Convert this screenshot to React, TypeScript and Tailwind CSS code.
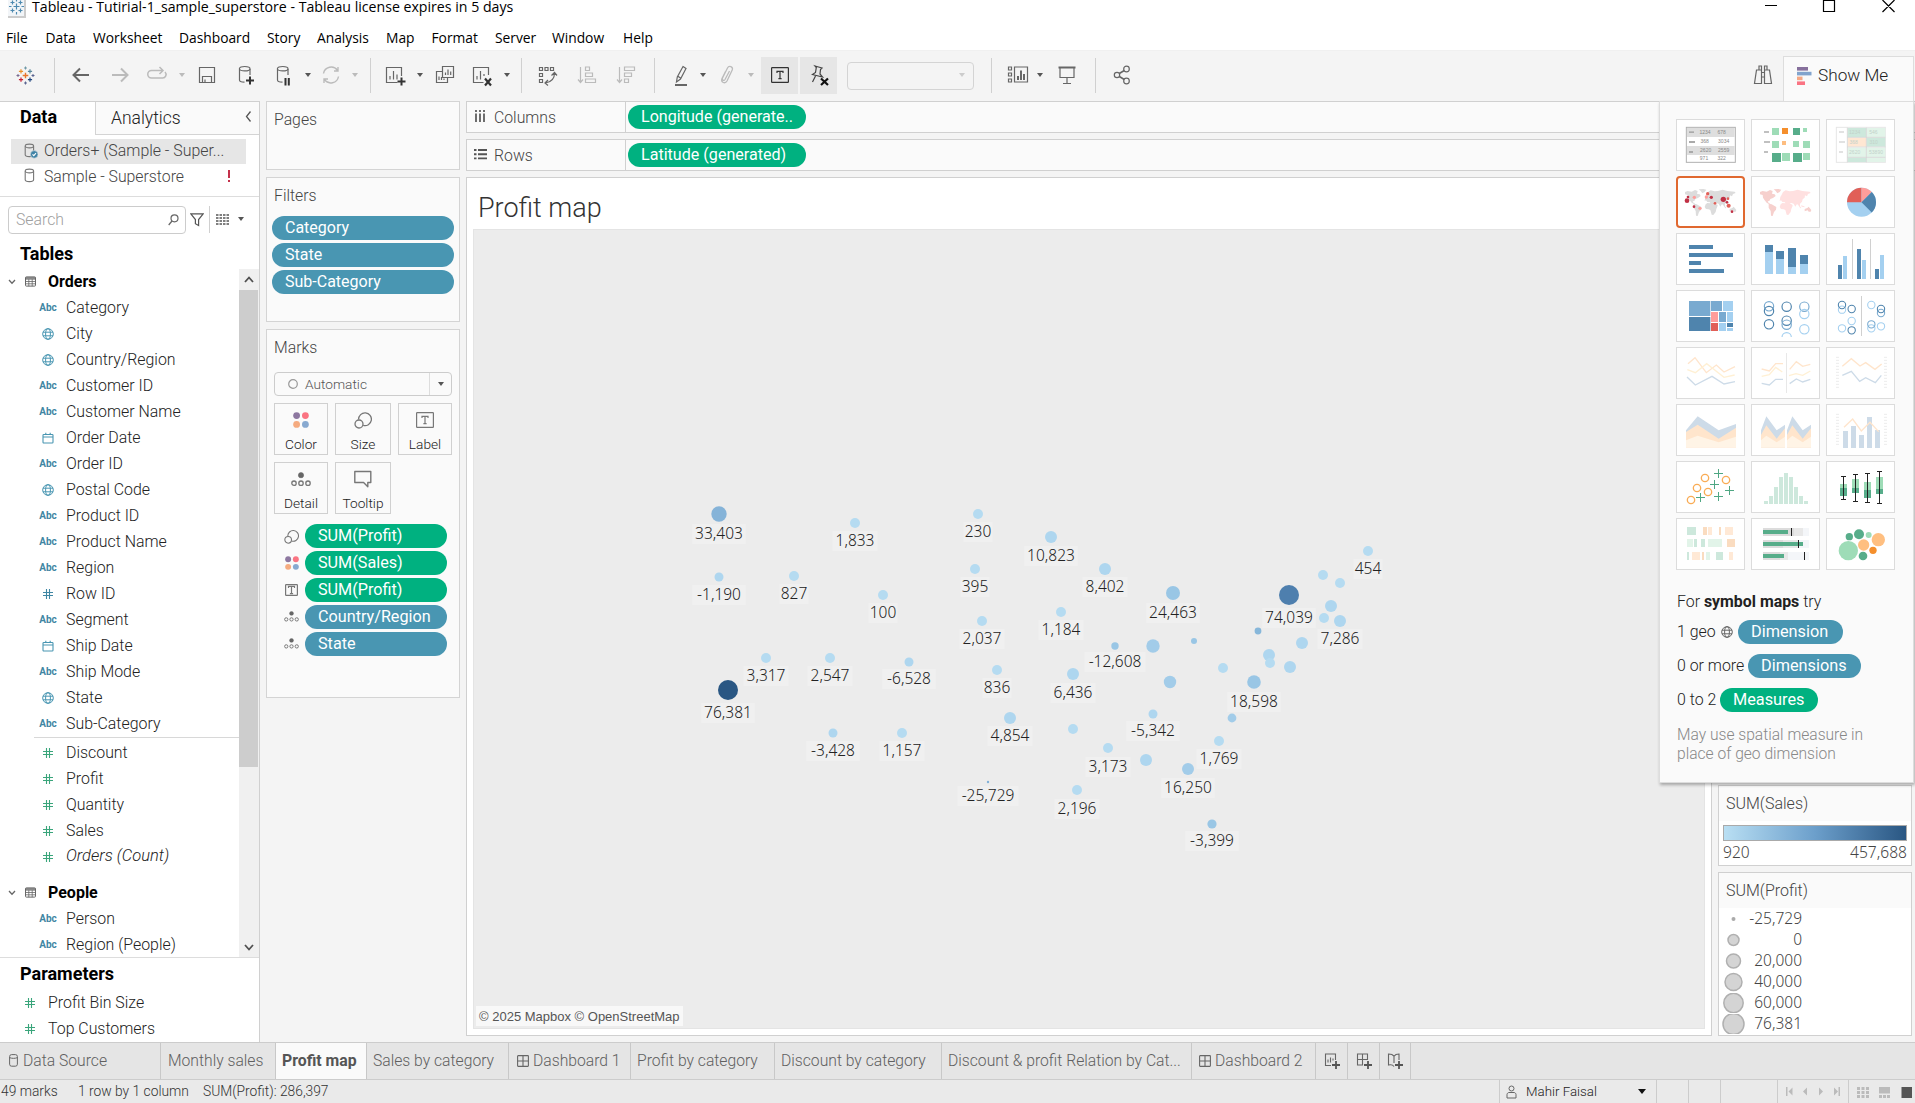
import React from 'react';

const BLUE = '#4996b2';

/* ---------- small icons ---------- */

function Caret({ color = '#555' }: { color?: string }) {
  return (
    <svg width="8" height="5" viewBox="0 0 8 5" className="shrink-0">
      <path d="M1 0h6L4 4z" fill={color} />
    </svg>
  );
}

function Globe({ color = BLUE, size = 12 }: { color?: string; size?: number }) {
  return (
    <svg width={size} height={size} viewBox="0 0 12 12" fill="none" stroke={color} strokeWidth="1">
      <circle cx="6" cy="6" r="5.3" />
      <ellipse cx="6" cy="6" rx="2.4" ry="5.3" />
      <path d="M1 4.2h10M1 7.8h10" />
    </svg>
  );
}

function Hash({ color }: { color: string }) {
  return (
    <svg width="12" height="12" viewBox="0 0 12 12" fill="none" stroke={color} strokeWidth="1.1">
      <path d="M1 4.500h10M1 7.500h10M4.500 1v10M7.500 1v10" />
    </svg>
  );
}

function Calendar() {
  return (
    <svg width="12" height="12" viewBox="0 0 12 12" fill="none" stroke={BLUE} strokeWidth="1.1">
      <rect x="1" y="2.5" width="10" height="8.5" rx="0.8" />
      <path d="M1 5h10M3.8 0.8v2M8.2 0.8v2" />
    </svg>
  );
}

function TableIcon() {
  return (
    <svg width="11" height="11" viewBox="0 0 11 11" fill="none" stroke="#666" strokeWidth="1">
      <rect x="0.5" y="0.9" width="10" height="9.2" rx="0.8" />
      <path d="M0.5 3.2h10M0.5 5.5h10M0.5 7.8h10M3.8 3.2v7M7.2 3.2v7" strokeWidth="0.8" />
      <path d="M0.5 2h10" strokeWidth="1.4" />
    </svg>
  );
}

function Cylinder({ check }: { check?: boolean }) {
  return (
    <svg width="15" height="16" viewBox="0 0 15 16" fill="none" stroke="#777" strokeWidth="1.1" className="shrink-0">
      <path d="M1.2 3.2v8.6c0 1 1.8 1.8 4.2 1.8s4.2-.8 4.2-1.8V3.2" />
      <ellipse cx="5.4" cy="3" rx="4.2" ry="1.9" />
      {check && (
        <>
          <circle cx="10.2" cy="11.4" r="3.8" fill="#3f83a6" stroke="#e6e6e6" strokeWidth="0.6" />
          <path d="M8.5 11.4l1.3 1.3 2.2-2.5" stroke="#fff" />
        </>
      )}
    </svg>
  );
}

function Sizes({ s = 18 }: { s?: number }) {
  return (
    <svg width={s} height={s} viewBox="0 0 18 18" fill="none" stroke="#777" strokeWidth="1.3">
      <path d="M4.600 8.400a6.400 6.400 0 1 1 4.600 6" />
      <circle cx="5" cy="13" r="4" />
    </svg>
  );
}

function FourDots({ s = 16 }: { s?: number }) {
  return (
    <svg width={s} height={s} viewBox="0 0 16 16">
      <circle cx="3.6" cy="3.6" r="3.4" fill="#8d77a0" />
      <circle cx="12.4" cy="3.6" r="3.4" fill="#fa7482" />
      <circle cx="3.6" cy="12.4" r="3.4" fill="#f5ab80" />
      <circle cx="12.4" cy="12.4" r="3.4" fill="#87a9d0" />
    </svg>
  );
}

function DetailIcon({ s = 20 }: { s?: number }) {
  return (
    <svg width={s} height={s * 0.75} viewBox="0 0 20 15" fill="none" stroke="#777" strokeWidth="1.3">
      <circle cx="10" cy="3.2" r="2.6" fill="#666" stroke="#666" strokeWidth="0.6" />
      <circle cx="3" cy="11.2" r="2.2" />
      <circle cx="10" cy="11.2" r="2.2" />
      <circle cx="17" cy="11.2" r="2.2" />
    </svg>
  );
}

function TBox({ w = 18, h = 16, color = '#777' }: { w?: number; h?: number; color?: string }) {
  return (
    <svg width={w} height={h} viewBox={`0 0 ${w} ${h}`} fill="none" stroke={color} strokeWidth="1.2">
      <rect x="0.6" y="0.6" width={w - 1.2} height={h - 1.2} rx="0.6" />
      <path d={`M${w / 2 - 3} ${h / 2 - 2}v-1.700h6v1.700M${w / 2} ${h / 2 - 3.500}v7M${w / 2 - 1.600} ${h / 2 + 3.600}h3.200`} />
    </svg>
  );
}

function TooltipIcon() {
  return (
    <svg width="20" height="18" viewBox="0 0 20 18" fill="none" stroke="#777" strokeWidth="1.4">
      <path d="M1.8 1.5h16v11h-3v4.2l-4.2-4.2H1.8z" strokeLinejoin="round" />
    </svg>
  );
}

function GridTab() {
  return (
    <svg width="12" height="12" viewBox="0 0 12 12" fill="none" stroke="#666" strokeWidth="1.1" className="mb-px shrink-0">
      <rect x="0.6" y="0.6" width="10.8" height="10.8" rx="0.6" />
      <path d="M6 0.6v10.8M0.6 6h10.8" />
    </svg>
  );
}

function Plus({ x, y }: { x: number; y: number }) {
  return <path d={`M${x - 4} ${y}h8M${x} ${y - 4}v8`} stroke="#333" strokeWidth="2" />;
}

function TableauMark() {
  const plus = (x: number, y: number, r: number) => `M${x - r} ${y}h${2 * r}M${x} ${y - r}v${2 * r}`;
  return (
    <svg width="19" height="19" viewBox="-1 -1 19 19" fill="none" strokeWidth="1.2">
      <path d={plus(8.5, 8.5, 2.8)} stroke="#e8762d" strokeWidth="1.4" />
      <path d={plus(4, 4.3, 2.1)} stroke="#eb912c" />
      <path d={plus(13, 4.3, 2.1)} stroke="#59879b" />
      <path d={plus(4, 12.7, 2.1)} stroke="#c72035" />
      <path d={plus(13, 12.7, 2.1)} stroke="#1f457e" />
      <path d={plus(8.5, 1, 1.5)} stroke="#7099a6" strokeWidth="1" />
      <path d={plus(8.5, 16, 1.5)} stroke="#5b6591" strokeWidth="1" />
      <path d={plus(1, 8.5, 1.5)} stroke="#7a6a90" strokeWidth="1" />
      <path d={plus(16, 8.5, 1.5)} stroke="#5b6591" strokeWidth="1" />
    </svg>
  );
}

/* ---------- toolbar ---------- */

function Slot({ w, children }: { w: string; children?: React.ReactNode }) {
  return <div className={`flex h-full shrink-0 items-center justify-center ${w}`}>{children}</div>;
}

function Sep({ w }: { w: string }) {
  return (
    <Slot w={w}>
      <div className="h-[35px] w-px shrink-0 bg-[#d0d0d0]" />
    </Slot>
  );
}

function TI({ children, dim }: { children: React.ReactNode; dim?: boolean }) {
  return (
    <svg width="24" height="24" viewBox="0 0 24 24" fill="none" stroke={dim ? '#bbb' : '#666'} strokeWidth="1.2" className="mb-px shrink-0">
      {children}
    </svg>
  );
}

function Toolbar() {
  return (
    <div className="flex h-[51px] items-center border-t border-[#f0f0f0] bg-[#f4f4f4] pb-px">
      <Slot w="w-[51px]"><TableauMark /></Slot>
      <Sep w="w-[6px]" />
      <Slot w="w-[48px]"><TI><path d="M20 12H5M11 5.500L4.500 12l6.500 6.500" strokeWidth="2" /></TI></Slot>
      <Slot w="w-[30px]"><TI dim><path d="M4 12h15M13 5.500l6.500 6.500-6.500 6.500" strokeWidth="2" /></TI></Slot>
      <Slot w="w-[44px]"><TI dim><path d="M17 7.500H6.500a3.500 3.500 0 0 0 0 7.500h11a3.500 3.500 0 0 0 2.500-6M14.500 4l3.500 3.500-3.500 3.500" strokeWidth="1.500" /></TI></Slot>
      <Slot w="w-[6px]"><Caret color="#bbb" /></Slot>
      <Slot w="w-[44px]"><TI><path d="M4.500 4.500h15v15h-15zM7.500 19.500v-6h9v6M10 19.500v-3" /></TI></Slot>
      <Slot w="w-[34px]"><TI><path d="M5.500 6v11c0 1.400 2 2.200 5 2.200M16 6v6" /><ellipse cx="10.700" cy="5.700" rx="5.300" ry="2.200" /><Plus x={16} y={17.500} /></TI></Slot>
      <Slot w="w-[40px]"><TI><path d="M6.500 6v11c0 1.400 2 2.200 5 2.200M17 6v6" /><ellipse cx="11.700" cy="5.700" rx="5.300" ry="2.200" /><path d="M14.500 15v7.500M17.800 15v7.500" stroke="#333" strokeWidth="2" /></TI></Slot>
      <Slot w="w-[10px]"><Caret /></Slot>
      <Slot w="w-[36px]"><TI dim><path d="M4.500 10.500a7.800 7.800 0 0 1 14-3.200M19.500 13.500a7.800 7.800 0 0 1-14 3.200M15 8h4V4M9 16H5v4" strokeWidth="1.400" /></TI></Slot>
      <Slot w="w-[12px]"><Caret color="#bbb" /></Slot>
      <Sep w="w-[19px]" />
      <Slot w="w-[30px]"><TI><path d="M18.500 13V4.500h-15v15h11M7 16.500v-3.500M10.500 16.500V8M14 16.500v-5" /><Plus x={18.500} y={18.500} /></TI></Slot>
      <Slot w="w-[20px]"><Caret /></Slot>
      <Slot w="w-[29px]"><TI><path d="M9.500 3.500h11v11h-11zM9.500 8.500h-6v11h11v-5M12.500 12V9.500M15 12V6.500M17.700 12V8.500M6 17v-3.500M8.500 17v-3M11 17v-1.500" /></TI></Slot>
      <Slot w="w-[46px]"><TI><path d="M18.500 12V4.500h-15v15h10M7 16.500v-3.500M10.500 16.500V8M14 13v-2" /><path d="M15 15.500l6 7M21 15.500l-6 7" stroke="#333" strokeWidth="2.200" /></TI></Slot>
      <Slot w="w-[3px]"><Caret /></Slot>
      <Sep w="w-[26px]" />
      <Slot w="w-[26px]"><TI><path d="M4.500 4.500h3v3h-3zM10 4.500h3v3h-3zM15.500 4.500h3v3h-3zM4.500 10.500h3v3h-3zM4.500 16.500h3v3h-3zM19.500 10c0 6-3 9-9 10M16.500 12.500l3-3 2.500 3M13 17l-3 3 3 2.500" /></TI></Slot>
      <Slot w="w-[54px]"><TI dim><path d="M5.500 4v15M3 16.500l2.500 3 2.500-3M10.500 4h4v3.500h-4zM10.500 10h7v3.500h-7zM10.500 16h10v3.500h-10z" /></TI></Slot>
      <Slot w="w-[24px]"><TI dim><path d="M5.500 4v15M3 16.500l2.500 3 2.500-3M10.500 4h10v3.500h-10zM10.500 10h7v3.500h-7zM10.500 16h4v3.500h-4z" /></TI></Slot>
      <Sep w="w-[32px]" />
      <Slot w="w-[22px]"><TI><path d="M14 3.500l3 2-5.500 10.500-4 3 .8-5zM8.500 13l3 2" /><path d="M6 22h12" strokeWidth="2" /></TI></Slot>
      <Slot w="w-[21px]"><Caret /></Slot>
      <Slot w="w-[28px]"><TI dim><path d="M14.500 8l-4.500 8.500c-1 1.700-3.500.5-2.500-1.500l5-10c1.500-3 6-1.200 4.700 2L12 18c-1.800 3.300-6.500 1.500-5-2.500l3.500-7" strokeWidth="1.300" /></TI></Slot>
      <Slot w="w-[20px]"><Caret color="#bbb" /></Slot>
      <div className="flex h-[37px] w-[37px] items-center justify-center bg-[#e6e6e6] pb-px"><TBox color="#333" w={18} h={16} /></div>
      <div className="ml-[2px] mr-[10px] flex h-[37px] w-[37px] items-center justify-center bg-[#e6e6e6]">
        <TI><path d="M8 3l7 2-1.500 1.500-.5 4.500 2.500 3-10-2.500 3-2 .8-5zM8.500 13l-3 6" stroke="#444" strokeWidth="1.200" /><path d="M14 15.500l7 6.500M21 15.500l-7 6.500" stroke="#111" strokeWidth="2.200" /></TI>
      </div>
      <div className="flex h-[28px] w-[127px] items-center justify-end rounded-sm border border-[#d4d4d4] pr-[7px]"><Caret color="#ccc" /></div>
      <Sep w="w-[35px]" />
      <Slot w="w-[18px]"><TI><path d="M2.500 4h3v3h-3zM2.500 10h3v3h-3zM2.500 16h3v3h-3zM8.500 4h13v15h-13z" /><path d="M12 17v-4M15 17V7.500M18 17v-6" strokeWidth="2" /></TI></Slot>
      <Slot w="w-[25px]"><Caret /></Slot>
      <Slot w="w-[29px]"><TI><path d="M3.500 4.500h17" strokeWidth="2" /><path d="M5 5v9.500h14V5M12 14.500v5.500M8 20.500h8" /></TI></Slot>
      <Sep w="w-[29px]" />
      <Slot w="w-[24px]"><TI><circle cx="7" cy="12" r="2.700" /><circle cx="16.500" cy="6" r="2.800" /><circle cx="16.500" cy="18" r="2.800" /><path d="M9.300 10.500l5-3M9.300 13.500l5 3" strokeWidth="1.500" /></TI></Slot>
      <div className="ml-auto flex h-full">
        <Slot w="w-[40px]"><TI><path d="M5.500 7h5v13.500h-7zM13.500 7h5l2 13.500h-7zM8 7V3h2.500v4M13.500 7V3H16v4M10.500 9.500h3M10.500 14h3" /></TI></Slot>
        <div className="relative z-20 -mb-px mr-px mt-[5px] flex w-[131px] items-center border border-b-0 border-[#ddd] bg-[#fafafa] pb-[7px] pl-[13px]">
          <svg width="15" height="18" viewBox="0 0 15 18" className="mr-[6px]">
            <path d="M0 0h11v3.600H0z" fill="#86709c" />
            <path d="M0 4.800h14.500v3.600H0z" fill="#82a4cd" />
            <path d="M0 9.600h5.500v3.600H0z" fill="#f5a885" />
            <path d="M0 14.400h8v3.600H0z" fill="#fa7483" />
          </svg>
          <span className="text-[17.200px] text-[#222]">Show Me</span>
        </div>
      </div>
    </div>
  );
}

/* ---------- data pane ---------- */

type Kind = 'abc' | 'geo' | 'date' | 'num' | 'meas';

function FieldIcon({ kind }: { kind: Kind }) {
  if (kind === 'geo') return <Globe />;
  if (kind === 'date') return <Calendar />;
  if (kind === 'num') return <Hash color="#3f86a3" />;
  if (kind === 'meas') return <Hash color="#3aa57b" />;
  return <span className="text-[10px] font-bold text-[#3f86a3]">Abc</span>;
}

function Field({ kind, name, italic }: { kind: Kind; name: string; italic?: boolean }) {
  return (
    <div className="flex h-[26px] items-center">
      <div className="ml-[38px] mr-[8px] flex w-[20px] justify-center"><FieldIcon kind={kind} /></div>
      <span className={italic ? 'text-[16.500px] italic text-[#222]' : 'text-[15.900px] text-[#222]'}>{name}</span>
    </div>
  );
}

function TableHead({ name }: { name: string }) {
  return (
    <div className="flex h-[26px] items-center">
      <svg width="8" height="6" viewBox="0 0 8 6" fill="none" stroke="#666" strokeWidth="1.300" className="ml-[8px] mr-[9px]">
        <path d="M1 1l3 3.200L7 1" />
      </svg>
      <TableIcon />
      <span className="ml-[12px] text-[16px] font-bold text-black">{name}</span>
    </div>
  );
}

const dims: [Kind, string][] = [
  ['abc', 'Category'], ['geo', 'City'], ['geo', 'Country/Region'], ['abc', 'Customer ID'], ['abc', 'Customer Name'],
  ['date', 'Order Date'], ['abc', 'Order ID'], ['geo', 'Postal Code'], ['abc', 'Product ID'], ['abc', 'Product Name'],
  ['abc', 'Region'], ['num', 'Row ID'], ['abc', 'Segment'], ['date', 'Ship Date'], ['abc', 'Ship Mode'], ['geo', 'State'],
  ['abc', 'Sub-Category'],
];

function DataPane() {
  return (
    <div className="flex w-[260px] shrink-0 flex-col border-r border-t border-[#d0d0d0] bg-white">
      <div className="flex h-[33px]">
        <div className="w-[95px] pl-[20px] pt-[3px] text-[18px] font-bold leading-[24px] text-black">Data</div>
        <div className="flex flex-1 justify-between border-b border-l border-[#d4d4d4] bg-[#fafafa] pl-[15px] pr-[7px] pt-[4px] text-[17.500px] leading-[24px] text-[#222]">
          Analytics
          <svg width="7" height="11" viewBox="0 0 7 11" fill="none" stroke="#555" strokeWidth="1.300" className="mt-[5px]">
            <path d="M5.500 0.500l-4 5 4 5" />
          </svg>
        </div>
      </div>
      <div className="h-[58px] pt-[4px]">
        <div className="ml-[11px] flex h-[25px] w-[235px] items-center bg-[#e6e6e6] pl-[13px] text-[15.900px] text-[#444]">
          <Cylinder check /><span className="ml-[5px] whitespace-nowrap">Orders+ (Sample - Super...</span>
        </div>
        <div className="ml-[11px] flex h-[25px] w-[235px] items-center pl-[13px] text-[15.800px] text-[#444]">
          <Cylinder /><span className="ml-[5px]">Sample - Superstore</span>
          <div className="ml-auto mr-[16px] flex flex-col items-center gap-[2px]">
            <i className="h-[8px] w-[2px] bg-[#c4314b]" /><i className="h-[2px] w-[2px] bg-[#c4314b]" />
          </div>
        </div>
      </div>
      <div className="mt-[3px] flex h-[47px] items-center border-t border-[#ddd] pl-[8px]">
        <div className="flex h-[28px] w-[178px] items-center justify-between rounded-sm border border-[#ccc] pl-[7px] pr-[6px] text-[15.800px] text-[#a0a0a0]">
          Search
          <svg width="11" height="12" viewBox="0 0 11 12" fill="none" stroke="#666" strokeWidth="1.200"><circle cx="6.500" cy="4.300" r="3.500" /><path d="M4 7L0.700 11" /></svg>
        </div>
        <svg width="14" height="14" viewBox="0 0 14 14" fill="none" stroke="#555" strokeWidth="1.200" className="ml-[4px]">
          <path d="M0.800 0.800h12.400L8.600 6.500v6l-3.200-1.800V6.500z" />
        </svg>
        <div className="ml-[5px] h-[27px] w-px bg-[#d0d0d0]" />
        <svg width="13" height="11" viewBox="0 0 13 11" stroke="#555" strokeWidth="1.500" className="ml-[6px] mr-[8px]">
          <path d="M0 1h13M0 4h13M0 7h13M0 10h13" strokeDasharray="2.500 1" />
        </svg>
        <Caret />
      </div>
      <div className="h-[26px] pl-[20px] text-[18px] font-bold leading-[21px] text-black">Tables</div>
      <div className="flex h-[690px] overflow-hidden">
        <div className="w-[239px]">
          <TableHead name="Orders" />
          {dims.map(([k, n]) => <Field key={n} kind={k} name={n} />)}
          <div className="mb-[2px] ml-[34px] h-px bg-[#d8d8d8]" />
          <Field kind="meas" name="Discount" />
          <Field kind="meas" name="Profit" />
          <Field kind="meas" name="Quantity" />
          <Field kind="meas" name="Sales" />
          <Field kind="meas" name="Orders (Count)" italic />
          <div className="h-[10px]" />
          <TableHead name="People" />
          <Field kind="abc" name="Person" />
          <Field kind="abc" name="Region (People)" />
        </div>
        <div className="flex h-[689px] w-[20px] flex-col justify-between bg-[#f0f0f0]">
          <div>
            <div className="flex h-[21px] items-center justify-center">
              <svg width="10" height="7" viewBox="0 0 10 7" fill="none" stroke="#505050" strokeWidth="1.800"><path d="M1 6l4-4.500L9 6" /></svg>
            </div>
            <div className="h-[477px] w-[19px] bg-[#cdcdcd]" />
          </div>
          <div className="flex h-[21px] items-center justify-center">
            <svg width="10" height="7" viewBox="0 0 10 7" fill="none" stroke="#505050" strokeWidth="1.800"><path d="M1 1l4 4.500L9 1" /></svg>
          </div>
        </div>
      </div>
      <div className="flex-1 border-t border-[#ddd]">
        <div className="h-[32px] pl-[20px] pt-[3px] text-[18px] font-bold leading-[25px] text-black">Parameters</div>
        {['Profit Bin Size', 'Top Customers'].map((n) => (
          <div key={n} className="flex h-[26px] items-center pl-[24px] text-[15.900px] text-[#222]">
            <Hash color="#3aa57b" /><span className="ml-[12px]">{n}</span>
          </div>
        ))}
      </div>
    </div>
  );
}

/* ---------- cards ---------- */

function MarkButton({ w, label, children }: { w: string; label: string; children: React.ReactNode }) {
  return (
    <div className={`flex h-[52px] flex-col items-center border border-[#d0d0d0] ${w}`}>
      <div className="flex h-[32px] items-center">{children}</div>
      <span className="text-[13.700px] leading-[17px] text-[#222]">{label}</span>
    </div>
  );
}

function MarkPill({ icon, label, green }: { icon: React.ReactNode; label: string; green?: boolean }) {
  return (
    <div className="flex h-[24px] items-center">
      <div className="ml-[7px] flex w-[27px] justify-center">{icon}</div>
      <div className={`flex h-[24px] w-[142px] items-center rounded-full pl-[13px] text-[16.200px] font-[450] text-white ${green ? 'bg-[#00b180]' : 'bg-[#4996b2]'}`}>
        {label}
      </div>
    </div>
  );
}

function Cards() {
  return (
    <div className="flex w-[200px] shrink-0 flex-col gap-[7px] pl-[6px]">
      <div className="h-[69px] border border-[#d4d4d4] bg-[#fafafa] pl-[7px] pt-[7px] text-[15.800px] leading-[22px] text-[#444]">Pages</div>
      <div className="h-[145px] border border-[#d4d4d4] bg-[#fafafa]">
        <div className="pl-[7px] pt-[7px] text-[15.800px] leading-[22px] text-[#444]">Filters</div>
        <div className="ml-[5px] mt-[9px] flex flex-col gap-[3px]">
          {['Category', 'State', 'Sub-Category'].map((n) => (
            <div key={n} className="flex h-[24px] w-[182px] items-center rounded-full bg-[#4996b2] pl-[13px] text-[16px] font-[450] text-white">{n}</div>
          ))}
        </div>
      </div>
      <div className="h-[369px] border border-[#d4d4d4] bg-[#fafafa] pl-[7px]">
        <div className="pt-[7px] text-[15.800px] leading-[22px] text-[#444]">Marks</div>
        <div className="mt-[13px] flex h-[24px] w-[178px] items-center rounded-sm border border-[#ccc] text-[13.700px] text-[#555]">
          <svg width="10" height="10" viewBox="0 0 10 10" className="ml-[13px] mr-[7px]"><circle cx="5" cy="5" r="4.300" fill="none" stroke="#999" strokeWidth="1.200" /></svg>
          Automatic
          <div className="ml-auto flex h-full w-[22px] items-center justify-center border-l border-[#ddd]"><Caret /></div>
        </div>
        <div className="mt-[7px] flex gap-[7px]">
          <MarkButton w="w-[54px]" label="Color"><FourDots /></MarkButton>
          <MarkButton w="w-[56px]" label="Size"><Sizes /></MarkButton>
          <MarkButton w="w-[54px]" label="Label"><TBox /></MarkButton>
        </div>
        <div className="mt-[7px] flex gap-[7px]">
          <MarkButton w="w-[54px]" label="Detail"><DetailIcon /></MarkButton>
          <MarkButton w="w-[56px]" label="Tooltip"><TooltipIcon /></MarkButton>
        </div>
        <div className="-ml-[3px] mt-[10px] flex flex-col gap-[3px]">
          <MarkPill icon={<Sizes s={15} />} label="SUM(Profit)" green />
          <MarkPill icon={<FourDots s={14} />} label="SUM(Sales)" green />
          <MarkPill icon={<TBox w={13} h={12} />} label="SUM(Profit)" green />
          <MarkPill icon={<DetailIcon s={15} />} label="Country/Region" />
          <MarkPill icon={<DetailIcon s={15} />} label="State" />
        </div>
      </div>
    </div>
  );
}

/* ---------- map ---------- */

const c1 = '#b5dbf1';
const c2 = '#aed6ef';
const c3 = '#a2cce9';
const c4 = '#99c6e5';

const marks: [number, number, number, string, string?, number?][] = [
  [719, 514, 7.700, '#85b3d8', '33,403', 534], [855, 523, 5, c1, '1,833', 541], [978, 514, 5, c1, '230', 532],
  [1051, 537, 6, c2, '10,823', 556], [719, 577, 4.500, c2, '-1,190', 595], [794, 576, 5, c1, '827', 594],
  [883, 595, 5, c1, '100', 613], [975, 569, 5, c1, '395', 587], [982, 621, 5, c1, '2,037', 639],
  [1061, 612, 5, c1, '1,184', 630], [766, 658, 5, c1, '3,317', 676], [830, 658, 5, c1, '2,547', 676],
  [909, 662, 4.500, c2, '-6,528', 679], [997, 670, 5, c1, '836', 688], [728, 690, 10, '#2a5783', '76,381', 713],
  [833, 733, 4.500, c2, '-3,428', 751], [902, 733, 5, c1, '1,157', 751], [1010, 718, 6, c2, '4,854', 736],
  [988, 782, 1.200, '#7fb0d8', '-25,729', 796], [1105, 569, 6, c2, '8,402', 587], [1173, 593, 7, c4, '24,463', 613],
  [1289, 595, 10, '#4e7fae', '74,039', 618], [1368, 551, 5, c1, '454', 569], [1340, 621, 6, c2, '7,286', 639],
  [1115, 646, 3.700, c4, '-12,608', 662], [1073, 674, 6, c2, '6,436', 693], [1254, 682, 6.800, c4, '18,598', 702],
  [1153, 714, 4.500, c2, '-5,342', 731], [1108, 748, 5, c1, '3,173', 767], [1219, 741, 5, c1, '1,769', 759],
  [1188, 769, 6, c3, '16,250', 788], [1077, 790, 5, c1, '2,196', 809], [1212, 824, 4.600, c4, '-3,399', 841],
  [1323, 575, 5, c1], [1340, 583, 5, c1], [1331, 606, 6, c2], [1324, 618, 5, c1], [1302, 643, 6, c2],
  [1258, 631, 3.400, '#87b7da'], [1269, 655, 6, c2], [1270, 663, 5, c1], [1290, 667, 6, c2], [1223, 668, 5, c1],
  [1153, 646, 6.700, c3], [1194, 641, 3, c4], [1170, 682, 6.200, c3], [1232, 718, 4.400, c3], [1073, 729, 5, c1],
  [1146, 760, 6, c2],
];

function SymbolMap() {
  return (
    <div className="relative h-[800px] w-[1232px] border border-[#e4e4e4] bg-[#ececec]">
      <svg width="1230" height="798" viewBox="474 230 1230 798" className="font-['Noto_Sans',sans-serif] text-[15.500px]">
        {marks.map(([x, , , , label, ly], i) => {
          if (!label || !ly) return null;
          const w = label.length * 8.200 + 4;
          return <rect key={i} x={x - w / 2} y={ly - 10} width={w} height="20" fill="#f0f0f0" />;
        })}
        {marks.map(([x, y, r, fill, label, ly], i) => (
          <g key={i}>
            <circle cx={x} cy={y} r={r} fill={fill} />
            {label && ly && <text x={x} y={ly + 5} textAnchor="middle" fill="#222">{label}</text>}
          </g>
        ))}
      </svg>
      <div className="absolute bottom-[2px] left-[2px] h-[20px] w-[207px] whitespace-nowrap bg-[#f8f8f8] pl-[3px] font-['Liberation_Sans',sans-serif] text-[13px] leading-[21px] text-[#555]">
        © 2025 Mapbox © OpenStreetMap
      </div>
    </div>
  );
}

function Shelf({ icon, name, pill }: { icon: React.ReactNode; name: string; pill: string }) {
  return (
    <div className="flex h-[32px] border border-r-0 border-[#d0d0d0] bg-[#fafafa]">
      <div className="flex w-[159px] items-center border-r border-[#d0d0d0] pl-[7px] pt-px text-[15.800px] text-[#444]">
        {icon}<span className="ml-[7px]">{name}</span>
      </div>
      <div className="ml-[2px] mt-[3px] flex h-[24px] w-[178px] items-center rounded-full bg-[#00b180] pl-[13px] pt-px text-[16.100px] font-[450] text-white">{pill}</div>
    </div>
  );
}

function Sheet() {
  return (
    <div className="flex flex-1 flex-col">
      <Shelf
        icon={<svg width="13" height="13" viewBox="0 0 13 13" className="mb-[3px]"><path d="M2 0v2M6 0v2M10 0v2M2 3.500V12M6 3.500V12M10 3.500V12" stroke="#555" strokeWidth="1.700" /></svg>}
        name="Columns" pill="Longitude (generate.." />
      <div className="h-[6px]" />
      <Shelf
        icon={<svg width="13" height="13" viewBox="0 0 13 13" className="mb-[2px]"><path d="M0 2h2.500M0 6.200h2.500M0 10.400h2.500M4 2h9M4 6.200h9M4 10.400h9" stroke="#555" strokeWidth="1.900" /></svg>}
        name="Rows" pill="Latitude (generated)" />
      <div className="mt-[6px] flex">
        <div className="h-[859px] w-[1246px] border border-[#d0d0d0] bg-white pl-[6px]">
          <div className="h-[51px] pl-[5px] pt-[13px] text-[27px] font-light leading-[34px] text-[#333]">Profit map</div>
          <SymbolMap />
        </div>
        <Legends />
      </div>
    </div>
  );
}

function Legends() {
  const rows: [string, number][] = [['-25,729', 2], ['0', 5.500], ['20,000', 7], ['40,000', 8.500], ['60,000', 9.700], ['76,381', 10.500]];
  return (
    <div className="ml-[6px] flex w-[194px] flex-col pt-[608px]">
      <div className="h-[81px] border border-[#d0d0d0] bg-white">
        <div className="h-[35px] bg-[#fafafa] pl-[7px] text-[16px] leading-[36px] text-[#444]">SUM(Sales)</div>
        <div className="mx-[4px] mt-[4px] h-[16px] border border-[#aaa] bg-gradient-to-r from-[#b9dff3] via-[#6c9fcb] to-[#2a5783]" />
        <div className="mx-[4px] flex justify-between font-['Noto_Sans',sans-serif] text-[15.600px] leading-[23px] text-[#444]"><span>920</span><span>457,688</span></div>
      </div>
      <div className="mt-[6px] h-[164px] overflow-hidden border border-[#d0d0d0] bg-white">
        <div className="h-[35px] bg-[#fafafa] pl-[7px] text-[16px] leading-[36px] text-[#444]">SUM(Profit)</div>
        {rows.map(([t, r]) => (
          <div key={t} className="flex h-[21px] items-center pl-[3px] font-['Noto_Sans',sans-serif] text-[15.500px] text-[#444]">
            <svg width="23" height="20" viewBox="0 0 23 20"><circle cx="11.500" cy="10" r={r} fill={r < 3 ? '#aaa' : '#d4d4d4'} stroke={r < 3 ? 'none' : '#b0b0b0'} strokeWidth="1.500" /></svg>
            <span className="w-[57px] text-right">{t}</span>
          </div>
        ))}
      </div>
    </div>
  );
}

/* ---------- show me ---------- */

function World({ a, b }: { a: string; b: string }) {
  return (
    <g>
      <path fill={a} d="M90 276l8-3 12 2 10-5 8 3-2 8 8 2 3 5-8 6-8 3-3 6-5 1 3 5 5 2-3 2-8-5-6-7-5-8-1-8-8-2zM131 268l14-1 9 2-5 7-7 4-5-7zM116 311l9 2 14 8-1 8-6 7-4 12-5-1-1-14-6-10zM224 327l8-3 4-4 8 10-2 5-6 0-3-4-9 3z" />
      <path fill={b} d="M151 291l4-7 4-8 8-5 12 3 10-1 14-4 14 4 22 2 3 4-8 3-3 7-6-3-1 7-6 5-2 7-6 6 0 8 4 5-3 1-6-9-4-4-5 8-5-9-7-2-5 1 8 4 1 3-4 10-2 9-7 9-5-1-4-14-5-2-8-1-4-6 3-8 5-4 9 1-1-3-8-1-4-5-4 2z" />
      <path fill={b} d="M213 316l10 3 1 3-9-2z" />
    </g>
  );
}

const DK = '#4f84ad';
const MD = '#79aad0';
const LT = '#a4d0f0';

type RectT = [number, number, number, number, string];
const Rects = ({ d }: { d: RectT[] }) => <>{d.map(([x, y, w, h, f], i) => <rect key={i} x={x} y={y} width={w} height={h} fill={f} />)}</>;
const Dots = ({ d }: { d: [number, number, number, string][] }) => <>{d.map(([x, y, r, f], i) => <circle key={i} cx={x} cy={y} r={r} fill={f} />)}</>;
const Rings = ({ d, r, w }: { d: [number, number, string][]; r: number; w: number }) => (
  <>{d.map(([x, y, s], i) => <circle key={i} cx={x} cy={y} r={r} fill="none" stroke={s} strokeWidth={w} />)}</>
);
const ticks = (x: number) => Array.from({ length: 11 }, (_, i) => `M${x} ${82 + i * 9}h9`).join('');

function Cell({ x, y, children }: { x: number; y: number; children: React.ReactNode }) {
  return (
    <text x={x} y={y} fontSize="15" textAnchor="middle" fill="currentColor" className="font-['Liberation_Sans',sans-serif]">{children}</text>
  );
}

const thumbs: [number, number, React.ReactNode, boolean?][] = [
  [63, 57, <g className="text-[#888]">
    <rect x="94" y="82" width="147" height="105" fill="#fff" stroke="#b0b0b0" strokeWidth="3" />
    <Rects d={[[96, 84, 143, 27, '#dedede'], [96, 138, 143, 27, '#dedede'], [102, 94, 15, 5, '#aaa'], [102, 123, 18, 6, '#aaa'], [102, 153, 12, 6, '#aaa']]} />
    <Cell x={150} y={102}>1234</Cell><Cell x={200} y={102}>678</Cell><Cell x={149} y={130}>368</Cell><Cell x={206} y={130}>3034</Cell>
    <Cell x={152} y={157}>2620</Cell><Cell x={206} y={157}>2559</Cell><Cell x={147} y={181}>971</Cell><Cell x={200} y={181}>322</Cell>
  </g>],
  [288, 57, <Rects d={[[327, 93, 15, 6, '#c0c0c0'], [327, 123, 18, 6, '#c0c0c0'], [327, 153, 12, 6, '#c0c0c0'], [351, 84, 21, 21, '#9edcb7'], [381, 84, 18, 18, '#f58f2c'], [414, 84, 21, 21, '#57ad8a'], [444, 84, 12, 12, '#9edcb7'], [351, 123, 21, 21, '#9edcb7'], [381, 123, 12, 12, '#fdbd80'], [414, 123, 18, 18, '#9edcb7'], [444, 123, 21, 21, '#9edcb7'], [351, 159, 27, 27, '#57ad8a'], [381, 159, 24, 24, '#9edcb7'], [414, 159, 27, 27, '#57ad8a'], [444, 159, 21, 21, '#9edcb7']]} />],
  [513, 57, <g className="text-[#c3d2ca]">
    <rect x="544" y="82" width="147" height="105" fill="#fff" stroke="#e6e6e6" strokeWidth="3" />
    <Rects d={[[578, 84, 56, 27, '#cde8dc'], [635, 84, 56, 27, '#e2f4e9'], [578, 113, 56, 27, '#ffe7d3'], [635, 113, 56, 27, '#cde8dc'], [578, 143, 56, 28, '#e2f4e9'], [635, 143, 56, 28, '#e2f4e9'], [578, 173, 56, 13, '#cde8dc'], [635, 173, 56, 13, '#e2f4e9'], [552, 93, 15, 6, '#e2e2e2'], [552, 123, 18, 6, '#e2e2e2'], [552, 153, 12, 6, '#e2e2e2']]} />
    <path d="M577 83v104M634 83v104M577 112h114M577 141h114M577 172h114" stroke="#d4d4d4" strokeWidth="2.500" />
    <Cell x={599} y={102}>1234</Cell><Cell x={655} y={102}>546</Cell><Cell x={596} y={133}>368</Cell><Cell x={656} y={133}>310</Cell><Cell x={599} y={163}>2620</Cell><Cell x={663} y={163}>53890</Cell>
  </g>],
  [63, 228, <g><World a="#dcdcdc" b="#dcdcdc" /><Dots d={[[96, 302, 7, '#c13145'], [99, 291, 4, '#c13145'], [118, 292, 5, '#ff9d9a'], [158, 281, 5, '#e15f57'], [154, 291, 5, '#ff9d9a'], [169, 292, 5, '#c13145'], [117, 320, 4, '#c13145'], [135, 325, 5, '#ff9d9a'], [180, 310, 4, '#e15f57'], [205, 298, 8, '#c13145'], [219, 296, 4, '#e15f57'], [216, 307, 4, '#c13145'], [221, 317, 6, '#e15f57'], [231, 335, 4, '#c13145']]} /></g>, true],
  [288, 228, <g transform="translate(225 0)"><World a="#f6d0cd" b="#ffe0e0" /></g>],
  [513, 228, <g>
    <circle cx="619.500" cy="307" r="43.500" fill={LT} />
    <path d="M619.500 307V263.500A43.500 43.500 0 0 0 576 307z" fill="#e15f57" />
    <path d="M619.500 307V263.500A43.500 43.500 0 0 1 650.300 276.200z" fill="#ff9d9a" />
    <path d="M619.500 307L650.300 276.200A43.500 43.500 0 0 1 650.300 337.800z" fill={DK} />
  </g>],
  [63, 399, <Rects d={[[102, 435, 72, 12, DK], [102, 459, 132, 12, DK], [102, 483, 36, 12, DK], [102, 507, 105, 12, DK]]} />],
  [288, 399, <Rects d={[[330, 435, 24, 21, DK], [330, 456, 24, 66, LT], [363, 453, 24, 24, DK], [363, 477, 24, 45, LT], [399, 444, 24, 57, DK], [399, 501, 24, 21, LT], [435, 465, 24, 27, DK], [435, 492, 24, 30, LT]]} />],
  [513, 399, <Rects d={[[549, 495, 12, 42, DK], [564, 468, 12, 69, LT], [606, 447, 12, 90, DK], [621, 480, 12, 57, LT], [660, 507, 12, 30, DK], [675, 465, 12, 72, LT], [591, 417, 3, 120, '#d0d0d0'], [645, 417, 3, 120, '#d0d0d0']]} />],
  [63, 570, <Rects d={[[102, 603, 64, 45, MD], [102, 651, 64, 42, DK], [168, 603, 33, 30, MD], [204, 603, 30, 30, LT], [168, 636, 21, 30, '#ff9d9a'], [192, 636, 21, 30, MD], [216, 636, 18, 30, LT], [168, 669, 21, 24, '#e15f57'], [192, 669, 21, 24, LT], [216, 669, 18, 12, DK], [216, 684, 18, 9, LT]]} />],
  [288, 570, <g><Rings r={14} w={3.500} d={[[342, 619, MD], [342, 633, DK], [342, 673, DK], [395, 620, DK], [395, 662, DK], [395, 674, MD], [395, 712, LT], [448, 620, MD], [448, 642, LT], [448, 688, LT]]} /><rect x="370" y="711" width="50" height="13" fill="#fff" /></g>],
  [513, 570, <g><Rings r={11} w={3.200} d={[[561, 629, LT], [561, 615, DK], [590, 627, DK], [590, 663, LT], [561, 685, LT], [590, 691, DK], [649, 615, LT], [678, 639, MD], [678, 627, DK], [649, 685, LT], [649, 673, MD], [678, 679, LT]]} /><path d="M619.500 588v120" stroke="#d0d0d0" strokeWidth="3" /></g>],
  [63, 51, <g fill="none" strokeWidth="4"><path stroke="#ffe5cc" d="M99 101l21-18 34 45 30-23 23 21 33-16" /><path stroke="#fff0d4" d="M97 119l24 9 34-27 52 41 32-7" /><path stroke="#cddbe8" d="M96 141l25 24 50-26 36 23 33-7" /></g>],
  [288, 51, <g fill="none" strokeWidth="4"><path stroke="#ffe5cc" d="M320 117l23 6 19-22h22M404 118l20-23 19 14 23-6" /><path stroke="#fff0d4" d="M320 139l23-5 19-22 20 14M402 137l21-6 20 5 23-13" /><path stroke="#cddbe8" d="M320 160l23 5 19-17h22M404 161l20-14 19 9 23-8" /><path stroke="#e8e8e8" strokeWidth="3" d="M394.500 69v120" /></g>],
  [513, 51, <g fill="none" strokeWidth="4"><path stroke="#ffe5cc" d="M562 109l27-23 26 22 17-10 28 20 20-16" /><path stroke="#cddbe8" d="M562 136l27-12 25 30 18-11 29 15 18-22" /><path stroke="#ececec" strokeWidth="3" d={ticks(543) + ticks(687)} /></g>],
  [63, 222, <g><path fill="#cddbe8" d="M93 301l35-42 63 42 52-19v20l-52 30-63-40-35 25z" /><path fill="#ffe5cc" d="M93 306l35-22 63 42 52-33v60H93z" /><path fill="#fff4e6" d="M93 331l35-14 63 20 52-17v33H93z" /></g>],
  [288, 222, <g>{[0, 78].map((o) => <g key={o} transform={`translate(${o} 0)`}><path fill="#cddbe8" d="M318 301l16-42 31 42 25-17v70h-72z" /><path fill="#ffe5cc" d="M318 315l16-29 31 40 25-31v58h-72z" /><path fill="#fff4e6" d="M318 331l16-14 31 20 25-17v33h-72z" /></g>)}</g>],
  [513, 222, <g><Rects d={[[564, 303, 15, 51, '#cddbe8'], [588, 288, 15, 66, '#cddbe8'], [612, 315, 15, 39, '#cddbe8'], [636, 261, 15, 93, '#cddbe8'], [660, 300, 15, 54, '#cddbe8']]} /><path fill="none" stroke="#ffe5cc" strokeWidth="4" d="M567 292l26-25 26 36 26-26 26 28" /><path stroke="#ececec" strokeWidth="3" transform="translate(0 171)" d={ticks(543) + ticks(687)} /></g>],
  [63, 393, <g><Rings r={11} w={4} d={[[150, 444, '#f9ac55'], [213, 450, '#f9ac55'], [126, 474, '#f9ac55'], [159, 486, '#f9ac55'], [108, 510, '#f9ac55']]} /><path stroke="#4fa783" strokeWidth="3" d="M177 430.500h27M190.500 417v27M165 463.500h27M178.500 450v27M210 481.500h27M223.500 468v27M123 502.500h27M136.500 489v27M177 499.500h27M190.500 486v27" /></g>],
  [288, 393, <Rects d={[[327, 513, 12, 9, '#cde8dc'], [342, 498, 12, 24, '#cde8dc'], [357, 471, 12, 51, '#cde8dc'], [372, 441, 12, 81, '#cde8dc'], [387, 429, 12, 93, '#cde8dc'], [402, 441, 12, 81, '#cde8dc'], [417, 471, 12, 51, '#cde8dc'], [432, 498, 12, 24, '#cde8dc'], [447, 513, 12, 9, '#cde8dc']]} />],
  [513, 393, <g><Rects d={[[555, 462, 21, 12, '#9edcb7'], [555, 474, 21, 24, '#57ad8a'], [591, 447, 21, 27, '#9edcb7'], [591, 474, 21, 15, '#57ad8a'], [627, 456, 21, 24, '#9edcb7'], [627, 480, 21, 24, '#57ad8a'], [663, 441, 21, 36, '#9edcb7'], [663, 477, 21, 15, '#57ad8a']]} /><path stroke="#222" strokeWidth="3" d="M565.500 439v69M558 439.500h15M558 508.500h15M601.500 433v81M594 433.500h15M594 514.500h15M637.500 430v87M630 430.500h15M630 517.500h15M673.500 424v96M666 424.500h15M666 520.500h15" /></g>],
  [63, 564, <Rects d={[[96, 591, 27, 24, '#cde8dc'], [144, 591, 12, 24, '#fadcc0'], [159, 591, 12, 24, '#ffe9d6'], [192, 591, 6, 24, '#fadcc0'], [210, 591, 24, 24, '#ffe9d6'], [96, 627, 18, 24, '#e2f4e9'], [117, 627, 9, 24, '#cde8dc'], [138, 627, 12, 24, '#cde8dc'], [159, 627, 42, 24, '#e2f4e9'], [216, 627, 24, 24, '#fadcc0'], [96, 666, 6, 24, '#cde8dc'], [111, 666, 24, 24, '#ffe9d6'], [141, 666, 6, 24, '#fadcc0'], [153, 666, 12, 24, '#e2f4e9'], [183, 666, 21, 24, '#cde8dc'], [222, 666, 12, 24, '#ffe9d6']]} />],
  [288, 564, <Rects d={[[324, 594, 138, 24, '#f4f6f9'], [324, 594, 120, 24, '#e8e8e8'], [324, 594, 93, 24, '#dcdcdc'], [324, 600, 75, 12, '#57ad8a'], [408, 594, 3, 24, '#222'], [324, 630, 138, 24, '#f4f6f9'], [324, 630, 108, 24, '#e8e8e8'], [324, 630, 60, 24, '#dcdcdc'], [324, 636, 120, 12, '#57ad8a'], [429, 630, 3, 24, '#222'], [324, 666, 138, 24, '#f4f6f9'], [324, 666, 75, 24, '#e8e8e8'], [324, 666, 51, 24, '#dcdcdc'], [324, 672, 63, 12, '#57ad8a'], [447, 666, 3, 24, '#222']]} />],
  [513, 564, <Dots d={[[580, 662, 29, '#9edcb7'], [583, 620, 11, '#57ad8a'], [612, 613, 15, '#57ad8a'], [641, 615, 9, '#9edcb7'], [670, 629, 20, '#ffbf80'], [626, 645, 17, '#ffbf80'], [654, 661, 11, '#f58f2c'], [624, 678, 13, '#57ad8a']]} />],
];

function ShowMe() {
  const pill = 'flex h-[24px] items-center rounded-full px-[13px] text-[16.300px] font-[450] text-white';
  return (
    <div className="absolute right-px top-[101px] z-10 h-[682px] w-[255px] border border-[#ddd] bg-[#fafafa] pl-[16px] pt-[17px] shadow-[1px_2px_3px_rgba(0,0,0,0.3)]">
      <div className="grid w-[219px] grid-cols-3 gap-x-[6px] gap-y-[5px]">
        {thumbs.map(([x, y, art, on], i) => (
          <div key={i} className={`relative h-[52px] w-[69px] bg-white ${on ? 'rounded-sm outline-2 -outline-offset-2 outline-[#e0682f]' : 'outline-1 -outline-offset-1 outline-[#dcdcdc]'}`}>
            <svg width="69" height="52" viewBox={`${x} ${y} 207 156`}>{art}</svg>
          </div>
        ))}
      </div>
      <div className="ml-[1px] mt-[20px] text-[15.900px] text-[#222]">
        <div className="leading-[24px]">For <b>symbol maps</b> try</div>
        <div className="mt-[6px] flex h-[24px] items-center">
          <span className="w-[44px] whitespace-nowrap">1 geo</span><Globe color="#666" /><div className={`${pill} ml-[5px] w-[105px] bg-[#4996b2]`}>Dimension</div>
        </div>
        <div className="mt-[10px] flex h-[24px] items-center">
          <span className="w-[71px] whitespace-nowrap">0 or more</span><div className={`${pill} w-[113px] bg-[#4996b2]`}>Dimensions</div>
        </div>
        <div className="mt-[10px] flex h-[24px] items-center">
          <span className="w-[43px]">0 to 2</span><div className={`${pill} w-[98px] bg-[#00b180]`}>Measures</div>
        </div>
        <div className="mt-[14px] whitespace-nowrap text-[15.600px] leading-[19px] text-[#888]">May use spatial measure in<br />place of geo dimension</div>
      </div>
    </div>
  );
}

/* ---------- bottom bars ---------- */

function Tab({ w, children }: { w: string; children: React.ReactNode }) {
  return <div className={`flex h-full shrink-0 items-center whitespace-nowrap border-r border-[#c8c8c8] ${w}`}>{children}</div>;
}

function AddTab({ children }: { children: React.ReactNode }) {
  return (
    <svg width="18" height="18" viewBox="0 0 18 18" fill="none" stroke="#666" strokeWidth="1.100">
      {children}
      <path d="M9 13h8M13 9v8" stroke="#555" strokeWidth="1.800" />
    </svg>
  );
}

function SheetTabs() {
  return (
    <div className="flex h-[38px] border-b border-t border-[#ccc] bg-[#e5e5e5] text-[15.700px] text-[#606060]">
      <Tab w="w-[161px] pl-[9px]">
        <svg width="9" height="13" viewBox="0 0 9 13" fill="none" stroke="#666" className="mb-px mr-[5px]"><rect x="0.600" y="0.600" width="7.800" height="11.600" rx="2" /><path d="M0.600 3.600c2 1 5.800 1 7.800 0" /></svg>
        Data Source
      </Tab>
      <Tab w="w-[115px] pl-[7px]">Monthly sales</Tab>
      <Tab w="w-[91px] bg-[#fafafa] pl-[6px] text-[15.800px] font-bold text-[#555]">Profit map</Tab>
      <Tab w="w-[142px] pl-[6px]">Sales by category</Tab>
      <Tab w="w-[122px] pl-[8px]"><GridTab /><span className="ml-[4px]">Dashboard 1</span></Tab>
      <Tab w="w-[144px] pl-[6px]">Profit by category</Tab>
      <Tab w="w-[167px] pl-[6px]">Discount by category</Tab>
      <Tab w="w-[250px] pl-[6px]">Discount &amp; profit Relation by Cat...</Tab>
      <Tab w="w-[124px] pl-[7px]"><GridTab /><span className="ml-[4px]">Dashboard 2</span></Tab>
      <Tab w="w-[32px] justify-center"><AddTab><path d="M8 13.500H2.500V2h10v6M5 10.500v-3M7.500 10.500v-5M10 8.500v-2" /></AddTab></Tab>
      <Tab w="w-[32px] justify-center"><AddTab><path d="M8 13H2.500V2h10v6M7.500 2v11M2.500 7.500h10" /></AddTab></Tab>
      <Tab w="w-[31px] justify-center"><AddTab><path d="M8 14.500c-1-1.500-3-2-5.500-1.500V2c2.500 0 4.500.7 5.500 2.200M8 4.200C9 2.700 11 2 13 2v6M8 4.200V11" /></AddTab></Tab>
    </div>
  );
}

function StatusBar() {
  const cell = 'h-full border-r border-[#ccc]';
  return (
    <div className="flex h-[23px] items-center bg-[#eaeaea] text-[13.800px] text-[#333]">
      <span className="ml-px w-[77px]">49 marks</span>
      <span className="w-[125px] whitespace-nowrap">1 row by 1 column</span>
      <span>SUM(Profit): 286,397</span>
      <div className="ml-auto flex h-full items-center border-l border-[#ccc]">
        <div className={`${cell} flex w-[157px] items-center pl-[6px] text-[13.300px] text-[#222]`}>
          <svg width="11" height="14" viewBox="0 0 11 14" fill="none" stroke="#666"><circle cx="5.500" cy="3.500" r="2.500" /><path d="M1 13V9.500C1 8.500 2 7.500 3 7.500h5c1 0 2 1 2 2V13z" /></svg>
          <span className="ml-[9px]">Mahir Faisal</span>
          <svg width="8" height="6" viewBox="0 0 8 6" className="ml-auto mr-[10px]"><path d="M0 0h8L4 5z" fill="#111" /></svg>
        </div>
        <div className={`${cell} w-[32px]`} />
        <div className={`${cell} w-[32px]`} />
        <div className={`${cell} w-[57px]`} />
        <div className={`${cell} flex w-[71px] items-center justify-between px-[8px]`}>
          <svg width="54" height="9" viewBox="0 0 54 9" fill="#bbb">
            <path d="M0 0h1.500v9H0zM6.500 0.500v8l-4-4zM21 0.500v8l-4-4zM33 0.500v8l4-4zM48 0.500v8l4-4zM52.500 0H54v9h-1.500z" />
          </svg>
        </div>
        <svg width="66" height="14" viewBox="0 0 66 14">
          <path fill="#bbb" d="M8 2h3v3H8zM12.500 2h3v3h-3zM17 2h3v3h-3zM8 6h3v3H8zM12.500 6h3v3h-3zM17 6h3v3h-3zM8 10h3v3H8zM12.500 10h3v3h-3zM17 10h3v3h-3zM30 2h11v6.500H30zM30 10h3v3h-3zM34 10h3v3h-3zM38 10h3v3h-3z" />
          <path fill="#555" d="M52.500 2H63v11H52.500z" />
        </svg>
      </div>
    </div>
  );
}

export default function App() {
  return (
    <div className="relative flex h-[1103px] w-[1915px] flex-col overflow-hidden bg-[#f4f4f4] font-[Roboto,sans-serif] font-[350]">
      <div className="h-[50px] bg-white font-['Open_Sans',sans-serif] text-[14.100px] font-normal text-black">
        <div className="flex h-[20px]">
          <div className="-mt-[2px] ml-[8px] flex h-[20px] w-[18px] items-start justify-center border-b-2 border-r-2 border-[#ccc] bg-[#f2f5f8]">
            <svg width="15" height="17" viewBox="0 0 15 17" fill="none" stroke="#4e8ab0" strokeWidth="1.200">
              <path d="M7.500 5.500v6M4.500 8.500h6M3.500 2.500v4M1.500 4.500h4M11.500 2.500v4M9.500 4.500h4M3.500 10.500v4M1.500 12.500h4M11.500 10.500v4M9.500 12.500h4M7.500 1v2.500M7.500 14v2.500M0 8.500h2.500M12.500 8.500H15" />
            </svg>
          </div>
          <div className="ml-[6px] h-[15px] text-[14.150px] leading-[14px]">Tableau - Tutirial-1_sample_superstore - Tableau license expires in 5 days</div>
          <svg width="132" height="16" viewBox="0 0 132 16" className="ml-auto mr-[19px]" fill="none" stroke="#000" strokeWidth="1.200">
            <path d="M1 5.500h12M59.500 0.500h11v11h-11zM118.500 0l12 12M130.500 0l-12 12" />
          </svg>
        </div>
        <div className="flex h-[30px] text-[13.800px] leading-[36px]">
          <span className="ml-[6px] w-[39.500px]">File</span>
          <span className="w-[47.500px]">Data</span>
          <span className="w-[86px]">Worksheet</span>
          <span className="w-[88px]">Dashboard</span>
          <span className="w-[50px]">Story</span>
          <span className="w-[69px]">Analysis</span>
          <span className="w-[45.500px]">Map</span>
          <span className="w-[63.500px]">Format</span>
          <span className="w-[57px]">Server</span>
          <span className="w-[71px]">Window</span>
          <span>Help</span>
        </div>
      </div>
      <Toolbar />
      <div className="flex h-[941px]">
        <DataPane />
        <Cards />
        <div className="w-[6px] shrink-0" />
        <Sheet />
      </div>
      <ShowMe />
      <SheetTabs />
      <StatusBar />
    </div>
  );
}
